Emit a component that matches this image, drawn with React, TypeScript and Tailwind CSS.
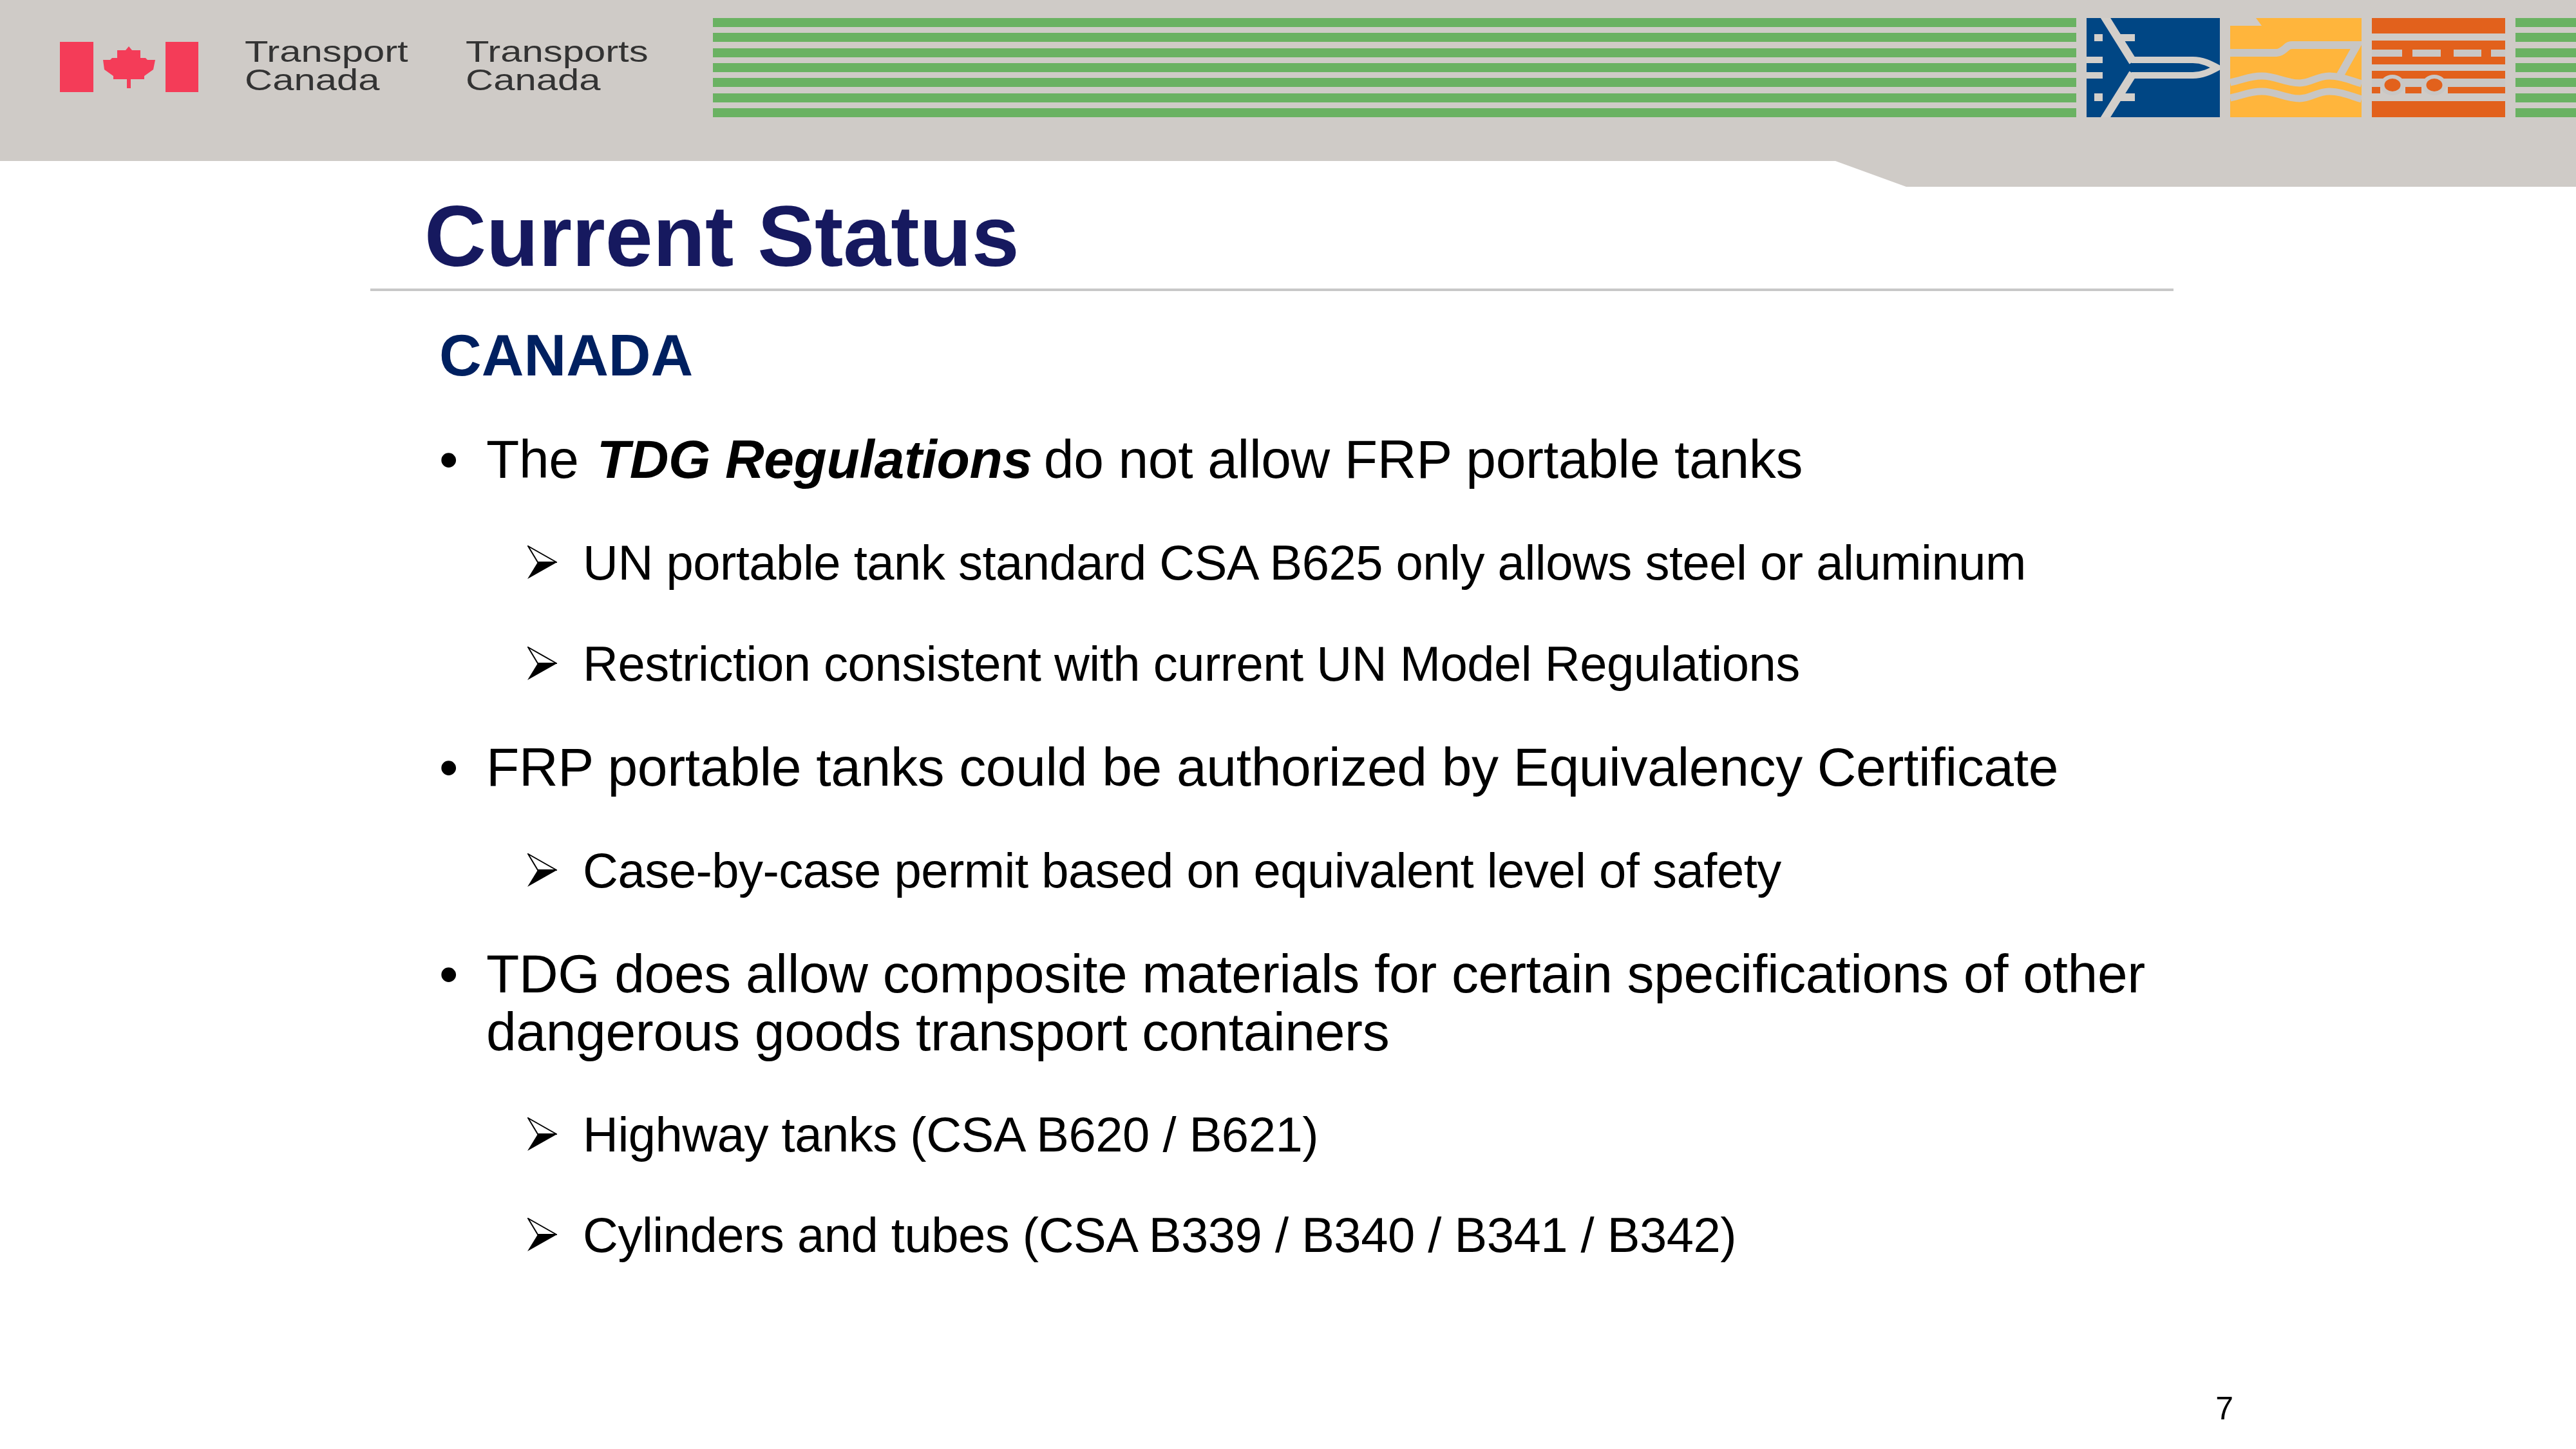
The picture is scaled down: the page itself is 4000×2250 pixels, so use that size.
import type { ReactNode } from 'react';

const Stripes = ({ className }: { className: string }) => (
  <div className={`flex h-[154px] flex-col justify-between ${className}`}>
    {[0, 1, 2, 3, 4, 5, 6].map((i) => (
      <div key={i} className="h-[14px] bg-[#6ab262]" />
    ))}
  </div>
);

const Flag = () => (
  <svg width="215" height="78" viewBox="0 0 215 78" className="mt-[37px] shrink-0">
    <rect x="0" y="0" width="52" height="78" fill="#f43c58" />
    <rect x="164" y="0" width="51" height="78" fill="#f43c58" />
    <path
      d="M107 7 112 13 125 13 125 25 133 25 136 28 148 28 145 43 131 53 131 58 110 58 110 72 104 72 104 58 83 58 83 53 69 43 67 28 78 28 81 25 89 25 89 13 102 13Z"
      fill="#f43c58"
    />
  </svg>
);

const Plane = () => (
  <svg width="207" height="154" viewBox="0 0 207 154" className="shrink-0">
    <rect width="207" height="154" fill="#004684" />
    <g fill="none" stroke="#d3cfca">
      <path strokeWidth="10" d="M70 65H165C180 65 192 71 203 77C192 83 180 89 165 89H70" />
      <path strokeWidth="13" d="M27 -4 72 68M27 158 72 86" />
    </g>
    <g fill="#d3cfca">
      <rect x="12" y="25" width="13" height="11" />
      <rect x="12" y="117" width="13" height="12" />
      <rect x="50" y="25" width="25" height="11" />
      <rect x="50" y="117" width="25" height="12" />
      <rect x="0" y="60" width="25" height="10" />
      <rect x="0" y="84" width="25" height="10" />
    </g>
  </svg>
);

const Ship = () => (
  <svg width="204" height="154" viewBox="0 0 204 154" className="shrink-0">
    <rect width="204" height="154" fill="#ffb53c" />
    <path d="M0 0H40L49 12H0Z" fill="#cfcbc7" />
    <g fill="none" stroke="#c8c6c4">
      <path strokeWidth="12" d="M0 54H72C78 54 82 50 87 46 90 43 92 42 96 42H197L170 90" />
      <path strokeWidth="11" d="M0 100C20 96 30 90 49 90 72 90 85 101 108 101 125 101 135 90 154 90 172 90 187 97 204 102" />
      <path strokeWidth="11" d="M0 124C20 120 30 114 49 114 72 114 85 125 108 125 125 125 135 114 154 114 172 114 187 121 204 126" />
    </g>
  </svg>
);

const Train = () => (
  <svg width="207" height="154" viewBox="0 0 207 154" className="shrink-0">
    <g fill="#e2611c">
      <rect y="0" width="207" height="24" />
      <rect y="35" width="207" height="37" />
      <rect y="82" width="207" height="12" />
      <rect y="107" width="13" height="10" />
      <rect x="52" y="107" width="25" height="10" />
      <rect x="118" y="107" width="89" height="10" />
      <rect y="129" width="207" height="25" />
    </g>
    <g fill="#c9c7c5">
      <rect x="0" y="49" width="47" height="11" />
      <rect x="63" y="49" width="44" height="11" />
      <rect x="127" y="49" width="43" height="11" />
      <rect x="185" y="49" width="22" height="11" />
      <rect x="0" y="94" width="207" height="13" />
      <ellipse cx="32" cy="104" rx="19" ry="16" />
      <ellipse cx="97" cy="104" rx="19" ry="16" />
    </g>
    <ellipse cx="32" cy="104" rx="12.5" ry="10" fill="#e2611c" />
    <ellipse cx="97" cy="104" rx="12.5" ry="10" fill="#e2611c" />
  </svg>
);

const Arrow = () => (
  <svg width="46" height="52" viewBox="0 0 46 52" className="shrink-0">
    <path d="M1 1 45 26H16Z" fill="#fff" stroke="#000" strokeWidth="2" />
    <path d="M0 52 46 26H16Z" fill="#000" />
  </svg>
);

const LogoWord = ({ top, bottom }: { top: string; bottom: string }) => (
  <div className="w-[343px] origin-left scale-x-[1.3] pt-[30px] text-[46px] leading-[44px] text-[#333333]">
    <div>{top}</div>
    <div>{bottom}</div>
  </div>
);

const Bullet = ({ children, className = '' }: { children: ReactNode; className?: string }) => (
  <div className={`flex text-[84px] leading-[90px] tracking-[-0.35px] text-black ${className}`}>
    <span className="w-[73px] shrink-0">•</span>
    <div>{children}</div>
  </div>
);

const SubBullet = ({ children, className = '' }: { children: string; className?: string }) => (
  <div className={`ml-[137px] flex text-[76px] leading-[90px] tracking-[-0.5px] text-black ${className}`}>
    <div className="flex h-[90px] w-[86px] shrink-0 items-start pt-[18px]">
      <Arrow />
    </div>
    <div>{children}</div>
  </div>
);

export default function App() {
  return (
    <div className="relative flex h-[2250px] w-[4000px] flex-col overflow-hidden bg-white font-['Liberation_Sans',Arial,sans-serif]">
      {/* Top banner */}
      <header className="relative flex h-[250px] shrink-0 items-start bg-[#cfcbc7] pl-[93px] pt-[28px]">
        <Flag />
        <div className="ml-[72px] flex w-[727px] shrink-0">
          <LogoWord top="Transport" bottom="Canada" />
          <LogoWord top="Transports" bottom="Canada" />
        </div>
        <Stripes className="w-[2117px] shrink-0" />
        <div className="ml-[16px] flex gap-[16px]">
          <Plane />
          <Ship />
          <Train />
        </div>
        <Stripes className="ml-[16px] flex-1" />
        <svg
          width="1150"
          height="40"
          viewBox="0 0 1150 40"
          className="absolute left-[2850px] top-[250px]"
        >
          <path d="M0 0H1150V40H110Z" fill="#cfcbc7" />
        </svg>
      </header>

      <main className="ml-[575px] flex w-[2800px] flex-1 flex-col">
        <h1 className="pl-[84px] pt-[51px] text-[133px] font-bold leading-[133px] text-[#16195f]">
          Current Status
        </h1>
        <div className="mt-[14px] h-[4px] bg-[#c8c8c8]" />

        <div className="flex flex-col pl-[107px]">
          <h2 className="mb-[71px] mt-[54px] text-[91px] font-bold leading-[91px] text-[#002060]">
            CANADA
          </h2>
          <Bullet>
            The <b className="ml-[5px] mr-[-5px] italic">TDG Regulations</b> do not allow FRP portable tanks
          </Bullet>
          <SubBullet className="mt-[71px]">UN portable tank standard CSA B625 only allows steel or aluminum</SubBullet>
          <SubBullet className="mt-[67px]">Restriction consistent with current UN Model Regulations</SubBullet>
          <Bullet className="mt-[70px]">FRP portable tanks could be authorized by Equivalency Certificate</Bullet>
          <SubBullet className="mt-[71px]">Case-by-case permit based on equivalent level of safety</SubBullet>
          <Bullet className="mt-[70px]">
            TDG does allow composite materials for certain specifications of other dangerous goods
            transport containers
          </Bullet>
          <SubBullet className="mt-[70px]">Highway tanks (CSA B620 / B621)</SubBullet>
          <SubBullet className="mt-[66px]">Cylinders and tubes (CSA B339 / B340 / B341 / B342)</SubBullet>
        </div>
      </main>

      <footer className="flex justify-end pb-[38px] pr-[532px] text-[50px] leading-[50px] text-black">
        7
      </footer>
    </div>
  );
}
